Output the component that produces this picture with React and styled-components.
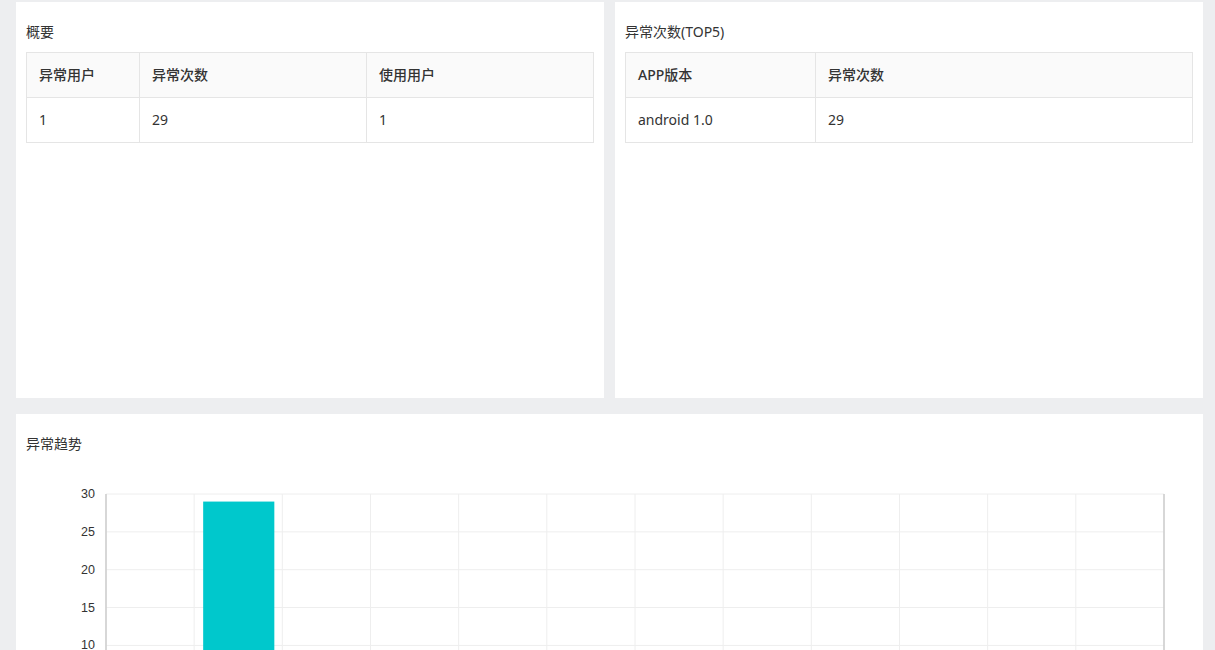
import React from 'react';
import styled, { createGlobalStyle } from 'styled-components';

const GlobalStyle = createGlobalStyle`
    body {
        margin: 0;
        background: #edeef0;
        font-family: "Noto Sans", "Noto Sans CJK SC", sans-serif;
        color: #333;
    }
`;

const Page = styled.div`
    padding: 2px 12px 0 16px;
    display: flex;
    flex-direction: column;
    gap: 16px;
`;

const TopRow = styled.div`
    display: grid;
    grid-template-columns: 1fr 1fr;
    gap: 11px;
`;

const Card = styled.div`
    background: #fff;
    height: ${props => props.height || 'auto'};
    padding: 0 10px;
    box-sizing: border-box;
`;

const Title = styled.div`
    padding-top: 20px;
    line-height: 20px;
    font-size: 14px;
    color: #333;
    margin-bottom: 10px;
`;

const Table = styled.table`
    width: 100%;
    border-collapse: collapse;
    table-layout: fixed;
    font-size: 14px;
    line-height: 20px;
`;

const Th = styled.th`
    height: 44px;
    padding: 0 12px;
    text-align: left;
    font-weight: 500;
    background: #fafafa;
    border: 1px solid #e5e5e5;
    color: #333;
`;

const Td = styled.td`
    height: 44px;
    padding: 0 12px;
    border: 1px solid #e5e5e5;
    color: #333;
`;

const ChartWrap = styled.div`
    padding-top: 20px;
    padding-bottom: 20px;
`;

const overview = { cols: ['异常用户', '异常次数', '使用用户'], widths: ['113px', '227px', 'auto'], row: ['1', '29', '1'] };
const top5 = { cols: ['APP版本', '异常次数'], widths: ['190px', 'auto'], row: ['android 1.0', '29'] };

const DataTable = ({ data }) => (
    <Table>
        <colgroup>
            {data.widths.map((w, i) => <col key={i} style={{ width: w }} />)}
        </colgroup>
        <thead>
            <tr>{data.cols.map(c => <Th key={c}>{c}</Th>)}</tr>
        </thead>
        <tbody>
            <tr>{data.row.map((v, i) => <Td key={i}>{v}</Td>)}</tr>
        </tbody>
    </Table>
);

const TrendChart = () => {
    const left = 80, right = 1138, top = 10, unit = 7.57, max = 30;
    const bottom = top + max * unit;
    const cols = 12;
    const colW = (right - left) / cols;
    const values = [0, 29, 0, 0, 0, 0, 0, 0, 0, 0, 0, 0];
    const ticks = [0, 5, 10, 15, 20, 25, 30];
    return (
        <svg width="1167" height={bottom + 40} style={{ display: 'block' }}>
            {ticks.map(t => {
                const y = bottom - t * unit;
                return (
                    <g key={t}>
                        <line x1={left} x2={right} y1={y} y2={y} stroke="#eeeeee" />
                        <text x={left - 11} y={y + 4} textAnchor="end" fontSize="12.5" fill="#333" fontFamily="Liberation Sans, Arial, sans-serif">{t}</text>
                    </g>
                );
            })}
            {Array.from({ length: cols + 1 }).map((_, i) => (
                <line key={i} x1={left + i * colW} x2={left + i * colW} y1={top} y2={bottom} stroke="#eeeeee" />
            ))}
            {values.map((v, i) => v > 0 && (
                <rect key={i} x={left + i * colW + 9} width={colW - 17} y={bottom - v * unit} height={v * unit} fill="#00c8cc" />
            ))}
            <line x1={left} x2={left} y1={top} y2={bottom} stroke="#cccccc" strokeWidth="1.5" />
            <line x1={right} x2={right} y1={top} y2={bottom} stroke="#cccccc" strokeWidth="1.5" />
            <line x1={left} x2={right} y1={bottom} y2={bottom} stroke="#cccccc" />
        </svg>
    );
};

const App = () => (
    <>
        <GlobalStyle />
        <Page>
            <TopRow>
                <Card height="396px">
                    <Title>概要</Title>
                    <DataTable data={overview} />
                </Card>
                <Card height="396px">
                    <Title>异常次数(TOP5)</Title>
                    <DataTable data={top5} />
                </Card>
            </TopRow>
            <Card>
                <Title>异常趋势</Title>
                <ChartWrap>
                    <TrendChart />
                </ChartWrap>
            </Card>
        </Page>
    </>
);

export default App;
